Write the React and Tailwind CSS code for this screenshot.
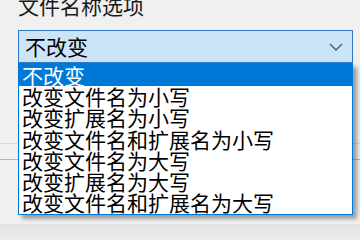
import React from 'react';

const options = [
  '不改变',
  '改变文件名为小写',
  '改变扩展名为小写',
  '改变文件名和扩展名为小写',
  '改变文件名为大写',
  '改变扩展名为大写',
  '改变文件名和扩展名为大写',
];

export default function App() {
  const selected = 0;

  return (
    <div className="relative w-[360px] h-[240px] overflow-hidden bg-[#f0f0f0] text-black [font-family:'Noto_Sans_CJK_SC','Noto_Sans',sans-serif]">
      {/* Label + combobox */}
      <div className="px-[18px]">
        <div className="-mt-[5px] h-[35px] text-[21px] leading-[21px] text-[#1a1a1a]">文件名称选项</div>
        <div className="flex h-[33px] w-[335px] items-center justify-between border border-[#2b7cc8] bg-[#cce4f7] pl-[6px] pr-[9px]">
          <span className="text-[21px] leading-[21px]">不改变</span>
          <svg width="14" height="8" viewBox="0 0 14 8" fill="none">
            <polyline points="1,1 7,7 13,1" stroke="#555" strokeWidth="1.4" />
          </svg>
        </div>
      </div>

      {/* Panel behind the open list */}
      <div className="h-[80px]" />
      <div className="h-[16px] border-t border-[#d9d9d9]" />
      <div className="h-[65px] border-t border-[#b4b4b4]" />
      <div className="h-[16px] border-t border-[#dedede] bg-gradient-to-b from-[#e4e4e4] to-[#ececec]" />

      {/* Dropdown list */}
      <div className="absolute left-[18px] top-[63px] w-[335px] h-[152px] border border-[#0078d7] bg-white shadow-[4px_4px_4px_rgba(0,0,0,0.35)]">
        {options.map((opt, i) => (
          <div
            key={opt}
            className={
              i === selected
                ? 'h-[22px] bg-[#0078d7] pl-[3px] text-[21px] leading-[22px] text-white'
                : 'h-[21.3px] pl-[3px] text-[21px] leading-[21.3px] text-black'
            }
          >
            {opt}
          </div>
        ))}
      </div>
    </div>
  );
}
